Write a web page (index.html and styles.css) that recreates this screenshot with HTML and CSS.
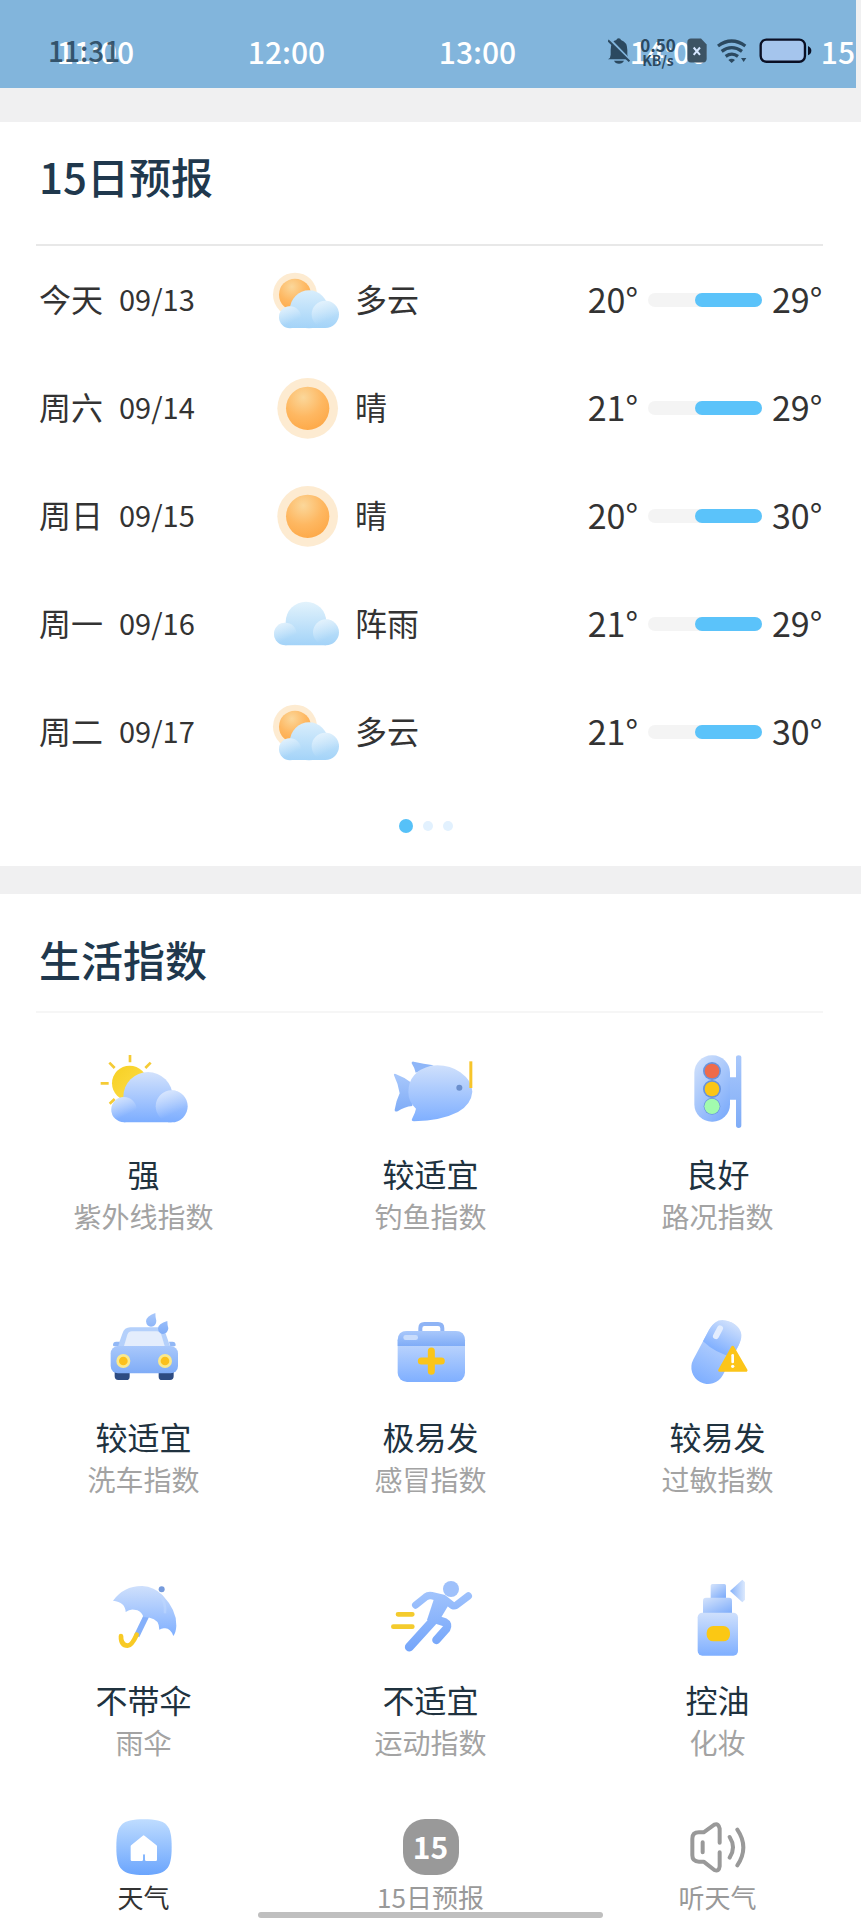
FILE: index.html
```html
<!DOCTYPE html>
<html lang="zh-CN">
<head>
<meta charset="utf-8">
<meta name="viewport" content="width=device-width, initial-scale=1">
<title>天气</title>
<link rel="stylesheet" href="styles.css">
</head>
<body>
<svg class="defs" width="0" height="0" aria-hidden="true">
  <defs>
    <radialGradient id="sunCore" cx=".4" cy=".25" r=".8"><stop offset="0" stop-color="#fbd79a"/><stop offset=".55" stop-color="#feb862"/><stop offset="1" stop-color="#fda847"/></radialGradient>
    <linearGradient id="skyCloudy" gradientUnits="userSpaceOnUse" x1="0" y1="90" x2="0" y2="205"><stop offset="0" stop-color="#d9eefc"/><stop offset="1" stop-color="#a3d3f8"/></linearGradient>
    <linearGradient id="skyRain" gradientUnits="userSpaceOnUse" x1="0" y1="64" x2="0" y2="196"><stop offset="0" stop-color="#e3f3fc"/><stop offset="1" stop-color="#a3d3f8"/></linearGradient>
    <linearGradient id="skyUv" gradientUnits="userSpaceOnUse" x1="0" y1="126" x2="0" y2="277"><stop offset="0" stop-color="#d3e2fc"/><stop offset="1" stop-color="#7cadff"/></linearGradient>
    <linearGradient id="bump" x1="0" y1="0" x2=".5" y2="1"><stop offset="0" stop-color="#fff" stop-opacity=".6"/><stop offset=".8" stop-color="#fff" stop-opacity="0"/></linearGradient>
    <linearGradient id="blue" x1="0" y1="0" x2="0" y2="1"><stop offset="0" stop-color="#cfe0fc"/><stop offset="1" stop-color="#7fafff"/></linearGradient>
    <linearGradient id="blueDiag" x1="0" y1="0" x2=".7" y2="1"><stop offset="0" stop-color="#d6e4fb"/><stop offset="1" stop-color="#80aefb"/></linearGradient>
    <linearGradient id="blueDeep" x1="0" y1="0" x2="0" y2="1"><stop offset="0" stop-color="#a9c8fb"/><stop offset="1" stop-color="#7facf7"/></linearGradient>
    <linearGradient id="yellow" x1="0" y1="0" x2="1" y2="1"><stop offset="0" stop-color="#f6cf22"/><stop offset="1" stop-color="#ffe04e"/></linearGradient>
    <linearGradient id="home" x1="0" y1="0" x2="0" y2="1"><stop offset="0" stop-color="#bedcff"/><stop offset="1" stop-color="#6ba5fd"/></linearGradient>
    <linearGradient id="spray" x1="0" y1="0" x2="1" y2="0"><stop offset="0" stop-color="#86b2fa"/><stop offset="1" stop-color="#dce9fd"/></linearGradient>
    <linearGradient id="runner" gradientUnits="userSpaceOnUse" x1="1080" y1="70" x2="1100" y2="270"><stop offset="0" stop-color="#a9c9fd"/><stop offset="1" stop-color="#74a5fa"/></linearGradient>
    <symbol id="w-cloudy" viewBox="816 12 216 216">
      <circle cx="888" cy="104" r="66" fill="#fdebd1"/>
      <circle cx="888" cy="104" r="48" fill="url(#sunCore)"/>
      <g fill="url(#skyCloudy)"><circle cx="930" cy="148" r="57"/><circle cx="873" cy="172" r="33"/><circle cx="979" cy="163" r="41"/><path d="M873 150h106v54h-106z"/></g>
      <circle cx="873" cy="172" r="33" fill="url(#bump)"/>
      <circle cx="979" cy="163" r="41" fill="url(#bump)"/>
    </symbol>
    <symbol id="w-sun" viewBox="816 336 216 216">
      <circle cx="926" cy="445" r="91" fill="#fdebd1"/>
      <circle cx="926" cy="445" r="65" fill="url(#sunCore)"/>
    </symbol>
    <symbol id="w-rain" viewBox="816 24 216 216">
      <g fill="url(#skyRain)"><circle cx="921" cy="126" r="61"/><circle cx="859" cy="162" r="34"/><circle cx="981" cy="157" r="39"/><path d="M859 140h122v56h-122z"/></g>
      <circle cx="859" cy="162" r="34" fill="url(#bump)"/>
      <circle cx="981" cy="157" r="39" fill="url(#bump)"/>
    </symbol>
  </defs>
</svg>

<header class="top">
  <ol class="hours">
    <li>11:00</li><li>12:00</li><li>13:00</li><li>14:00</li><li>15:00</li>
  </ol>
  <div class="status">
    <time class="clock">11:31</time>
    <div class="status-icons">
      <svg class="bell" viewBox="535 114 66 78" aria-label="静音"><path d="M535 178q8-4 8-14v-14q0-26 17-30 1-5 7-5t7 5q19 6 19 30v14q0 10 8 14z" fill="#2b4960"/><path d="M553 182h30q-4 9-15 9t-15-9z" fill="#2b4960"/><path d="M536 114l66 68" stroke="#82b5dc" stroke-width="8"/><path d="M535 121l64 63" stroke="#2b4960" stroke-width="6"/></svg>
      <div class="speed"><b>0.50</b><b class="unit">KB/s</b></div>
      <svg class="sim" viewBox="771 116 60 74" aria-label="无卡"><path d="M783 117h30l17 18v43q0 11-11 11h-36q-11 0-11-11v-50q0-11 11-11z" fill="#3c5364"/><path d="M791 144l19 22M810 144l-19 22" stroke="#d5e6ff" stroke-width="6"/></svg>
      <svg class="wifi" viewBox="858 116 90 76" aria-label="无线网络"><g fill="none" stroke="#2b4960" stroke-width="10"><path d="M861 139q41-30 82 0"/><path d="M872 155q30-22 61 0"/><path d="M884 170q19-13 37 0"/></g><path d="M892 181q10-8 20 0l-10 9zM930 175h16l-8 12z" fill="#2b4960"/></svg>
      <svg class="battery" viewBox="985 116 158 76" aria-label="电量"><rect x="990" y="120" width="132" height="66" rx="17" fill="#a5c5ed" stroke="#0a0f24" stroke-width="7"/><path d="M1131 139q10 5 10 14t-10 14z" fill="#0a0f24"/></svg>
    </div>
  </div>
</header>

<main>
  <section class="panel forecast">
    <h2>15日预报</h2>
    <ul class="days">
      <li><span>今天</span><time>09/13</time><svg aria-hidden="true"><use href="#w-cloudy"/></svg><span>多云</span><span class="temp">20°</span><i class="track"></i><span class="temp">29°</span></li>
      <li><span>周六</span><time>09/14</time><svg aria-hidden="true"><use href="#w-sun"/></svg><span>晴</span><span class="temp">21°</span><i class="track"></i><span class="temp">29°</span></li>
      <li><span>周日</span><time>09/15</time><svg aria-hidden="true"><use href="#w-sun"/></svg><span>晴</span><span class="temp">20°</span><i class="track"></i><span class="temp">30°</span></li>
      <li><span>周一</span><time>09/16</time><svg aria-hidden="true"><use href="#w-rain"/></svg><span>阵雨</span><span class="temp">21°</span><i class="track"></i><span class="temp">29°</span></li>
      <li><span>周二</span><time>09/17</time><svg aria-hidden="true"><use href="#w-cloudy"/></svg><span>多云</span><span class="temp">21°</span><i class="track"></i><span class="temp">30°</span></li>
    </ul>
    <div class="pager">
      <button class="current" aria-label="第1页"></button><button aria-label="第2页"></button><button aria-label="第3页"></button>
    </div>
  </section>

  <section class="panel indices">
    <h2>生活指数</h2>
    <ul class="grid">
      <li>
        <svg viewBox="106 36 288 288" aria-hidden="true"><g stroke="#f5cb35" stroke-width="8"><path d="M208 75v22M146 98l16 16M120 160h24M270 98l-16 16M147 221l15-14"/></g><circle cx="207" cy="160" r="53" fill="url(#yellow)"/><g fill="url(#skyUv)"><circle cx="262" cy="200" r="74"/><circle cx="190" cy="239" r="38"/><circle cx="333" cy="229" r="48"/><path d="M190 200h143v77h-143z"/></g><circle cx="190" cy="239" r="38" fill="url(#bump)"/><circle cx="333" cy="229" r="48" fill="url(#bump)"/></svg>
        <strong>强</strong><span>紫外线指数</span>
      </li>
      <li>
        <svg viewBox="127 36 288 288" aria-hidden="true"><path d="M160 136q-2-6 5-4 26 10 44 24l6 72q-24 2-44 16-10 3-9-5 4-26 15-49-5-30-17-54z" fill="url(#blueDeep)"/><path d="M213 100q-1-6 6-5 30 6 60 11l-54 22q-3-14-12-28z" fill="#8eb6f8"/><path d="M203 186q1-62 68-79 52-6 88 20 36 26 36 58-3 38-43 61-50 26-132 28-10 0-5-9 9-18 11-29-23-20-23-50z" fill="url(#blue)"/><path d="M386 94h9v80h-9z" fill="#f7c52b"/><circle cx="356" cy="173" r="9" fill="#6b8fcd"/></svg>
        <strong>较适宜</strong><span>钓鱼指数</span>
      </li>
      <li>
        <svg viewBox="118 36 288 288" aria-hidden="true"><path d="M292 142h24V81q0-5 8-5t8 5v205q0 8-8 8t-8-8v-77h-24z" fill="url(#blueDeep)"/><rect x="191" y="76" width="107" height="199" rx="52" fill="url(#blueDiag)"/><g fill="#6993dc"><circle cx="244" cy="123" r="27"/><circle cx="244" cy="177" r="27"/><circle cx="244" cy="229" r="25"/></g><circle cx="244" cy="123" r="22" fill="#ee6b4a"/><circle cx="244" cy="177" r="22" fill="#fbc616"/><circle cx="244" cy="229" r="23" fill="#a2fbae"/></svg>
        <strong>良好</strong><span>路况指数</span>
      </li>
      <li>
        <svg viewBox="106 30 288 288" aria-hidden="true"><path d="M162 225h45v20q0 10-10 10h-24q-11 0-11-11zM294 225h45v19q0 11-11 11h-24q-10 0-10-10z" fill="#2d4b82"/><path d="M170 158l15-42q6-19 24-19h82q18 0 24 19l15 42z" fill="#b4d0fb"/><path d="M190 153l10-34q4-10 14-10h74q10 0 14 10l10 34z" fill="#e4edfc"/><path d="M157 150q0-10 10-10h10l-4 14h-12q-4 0-4-4zM345 150q0-10-10-10h-10l4 14h12q4 0 4-4z" fill="#92b8f6"/><rect x="150" y="153" width="202" height="82" rx="22" fill="url(#blueDeep)"/><circle cx="188" cy="198" r="21" fill="#fbe98c"/><circle cx="188" cy="198" r="13" fill="#fcc01b"/><circle cx="313" cy="198" r="21" fill="#fbe98c"/><circle cx="313" cy="198" r="13" fill="#fcc01b"/><path d="M284 54q-28 10-28 25 2 16 15 16 16-1 16-18-3-10-3-23zM320 78q-28 9-28 22 1 16 15 17 15-2 16-17-3-10-3-22z" fill="url(#blueDeep)"/></svg>
        <strong>较适宜</strong><span>洗车指数</span>
      </li>
      <li>
        <svg viewBox="967 30 288 288" aria-hidden="true"><path d="M1079 112v-12q0-13 12-13h41q13 0 13 13v12" fill="none" stroke="#8fb4f5" stroke-width="12"/><rect x="1011" y="108" width="202" height="153" rx="28" fill="url(#blue)"/><path d="M1011 153v-17q0-28 28-28h145q29 0 29 28v17z" fill="url(#blueDeep)"/><rect x="1028" y="120" width="44" height="15" rx="7" fill="#c8dcfc"/><path d="M1112 168v61M1082 198h60" stroke="#fac51a" stroke-width="21" stroke-linecap="round"/></svg>
        <strong>极易发</strong><span>感冒指数</span>
      </li>
      <li>
        <svg viewBox="118 30 288 288" aria-hidden="true"><g transform="rotate(28 256 172)"><rect x="206" y="71" width="100" height="202" rx="50" fill="url(#blue)"/><path d="M206 161v-40q0-50 50-50t50 50v40q-50 14-100 0z" fill="url(#blue)"/><rect x="224" y="94" width="18" height="44" rx="9" fill="#e3edfe"/></g><path d="M306 157l40 69h-79z" fill="#fcc519" stroke="#fcc519" stroke-width="9" stroke-linejoin="round"/><path d="M306 181v20" stroke="#fff" stroke-width="8" stroke-linecap="round"/><circle cx="306" cy="214" r="5" fill="#fff"/></svg>
        <strong>较易发</strong><span>过敏指数</span>
      </li>
      <li>
        <svg viewBox="106 24 288 288" aria-hidden="true"><circle cx="303" cy="88" r="9" fill="#769bdc"/><path d="M257 168l-29 60" stroke="#85b0fa" stroke-width="17"/><path d="M228 224q-15 33-27 33-21-1-20-29" fill="none" stroke="#f8ca25" stroke-width="14" stroke-linecap="round"/><path d="M157 122q33-45 88-44 36 2 61 28 43 46 41 91-1 20-9 31-9-23-24-23-10-2-18 4 0-31-29-36-12-2-18-1-8-23-28-23-13-3-26 7-1-30-38-34z" fill="url(#blue)"/><path d="M299 106q17 21 14 54" stroke="#bed7ff" stroke-width="8" fill="none" opacity=".6"/></svg>
        <strong>不带伞</strong><span>雨伞</span>
      </li>
      <li>
        <svg viewBox="967 24 288 288" aria-hidden="true"><g stroke="#f4cb2d" stroke-width="14" stroke-linecap="round"><path d="M1012 163h43M998 200h57"/></g><g fill="none" stroke="url(#runner)" stroke-linecap="round" stroke-linejoin="round"><path d="M1065 135l30-24q8-6 18-4l35 8 28 22q5 2 10-1l37-28" stroke-width="22"/><path d="M1144 124l-28 60-70 77" stroke-width="27"/><path d="M1124 178l28 9q12 6 5 19l-30 34" stroke-width="25"/></g><path d="M1122 110l45 20-36 60-32-10z" fill="url(#runner)"/><circle cx="1171" cy="87" r="24" fill="#9fc1fb"/></svg>
        <strong>不适宜</strong><span>运动指数</span>
      </li>
      <li>
        <svg viewBox="1828 24 288 288" aria-hidden="true"><rect x="1950" y="72" width="46" height="46" rx="5" fill="url(#blueDiag)"/><rect x="1927" y="113" width="87" height="55" rx="9" fill="url(#blueDiag)"/><rect x="1911" y="158" width="121" height="129" rx="14" fill="url(#blue)"/><rect x="1938" y="198" width="70" height="46" rx="20" fill="#fbc814"/><path d="M2008 93l37-34 8 8v52l-8 8z" fill="url(#spray)"/></svg>
        <strong>控油</strong><span>化妆</span>
      </li>
    </ul>
  </section>
</main>

<nav class="tabs">
  <a href="#" class="active" aria-current="page"><svg viewBox="166 86 168 168" aria-hidden="true"><path d="M250 87c68 0 83 16 83 83s-15 84-83 84-83-17-83-84 15-83 83-83z" fill="url(#home)"/><path d="M249 139l36 29v40h-28v-17q-7-7-14 0v17h-29v-40z" fill="#fff" stroke="#fff" stroke-width="8" stroke-linejoin="round"/></svg>天气</a>
  <a href="#"><b class="badge">15</b>15日预报</a>
  <a href="#"><svg viewBox="1889 86 168 168" aria-hidden="true"><g fill="none" stroke="#999" stroke-width="12" stroke-linecap="round" stroke-linejoin="round"><path d="M1978 157v-42q-3-17-16-12l-32 23h-14q-20 0-20 19v50q0 19 20 19h14l32 25q14 6 16-11v-42"/><path d="M1927 156v30M2008 140q20 31 0 62M2031 118q36 53 0 107"/></g></svg>听天气</a>
  <i class="home-bar"></i>
</nav>
</body>
</html>
```
FILE: styles.css
```css
* { box-sizing: border-box; }

body {
  margin: 0;
  background: #f0f0f1;
  color: #333;
  font-family: "Noto Sans CJK SC", "Noto Sans", sans-serif;
}

ul, ol { margin: 0; padding: 0; list-style: none; }
svg { display: block; }
.defs { position: absolute; }

/* Hourly strip scrolled under the system status bar */
.top {
  position: relative;
  height: 88px;
  margin-right: 5px;
  overflow: hidden;
  background: #82b5dc;
}

.hours { display: flex; padding-top: 29px; }

.hours li {
  flex: 0 0 191px;
  font-size: 30px;
  font-weight: 500;
  line-height: 44px;
  text-align: center;
  color: #fff;
}

.status {
  position: absolute;
  inset: 0;
  display: flex;
  justify-content: space-between;
  padding: 28px 44px 0 48px;
  color: #2b4960;
}

.clock { font-size: 28px; font-weight: 500; line-height: 44px; opacity: .9; }
.status-icons { display: flex; align-items: flex-start; padding-top: 10px; }
.bell { width: 22px; height: 26px; margin-right: 3px; }
.speed { display: flex; flex-direction: column; width: 50px; text-align: center; font-size: 17px; line-height: 14px; }
.unit { font-size: 14px; line-height: 17px; }
.sim { width: 20px; height: 25px; margin: 0 10px 0 4px; }
.wifi { width: 30px; height: 26px; margin-right: 12px; }
.battery { width: 53px; height: 26px; }

.panel { background: #fff; }

.panel h2 {
  margin: 0 39px;
  font-size: 42px;
  font-weight: 500;
  line-height: 56px;
  color: #20384d;
}

.forecast { margin-top: 34px; padding-top: 26px; }
.indices { margin-top: 28px; padding-top: 37px; }

.days::before, .grid::before {
  content: "";
  display: block;
  height: 2px;
  margin: 0 38px 0 36px;
  background: #e8e8e8;
}

.days { margin-top: 40px; }
.grid { margin-top: 24px; }

.days li {
  display: grid;
  grid-template-columns: 80px 152px 84px 1fr 60px 134px 50px;
  align-items: center;
  height: 108px;
  padding: 0 39px;
  font-size: 32px;
  line-height: 48px;
}

.days span, .days time { padding-bottom: 5px; }
.days time { font-size: 29px; }
.days svg { width: 72px; height: 72px; }
.days .temp { padding-bottom: 3px; font-size: 34px; text-align: right; }

.track {
  height: 14px;
  margin: 0 10px;
  padding-left: 47px;
  border-radius: 7px;
  background: #f4f4f4;
}

.track::before {
  content: "";
  display: block;
  height: 100%;
  border-radius: 7px;
  background: #5bc3fa;
}

.pager { display: flex; justify-content: center; align-items: center; gap: 10px; height: 80px; padding-right: 10px; }
.pager button { width: 10px; height: 10px; padding: 0; border: 0; border-radius: 50%; background: #e2f1fe; }
.pager .current { width: 14px; height: 14px; background: #56c1f8; }

.grid { display: grid; grid-template-columns: repeat(3, 1fr); }
.grid::before { grid-column: 1 / -1; background: #f6f6f6; }

.grid li {
  display: flex;
  flex-direction: column;
  align-items: center;
  height: 263px;
  padding-top: 29px;
}

.grid svg { width: 96px; height: 96px; margin-bottom: 14px; }
.grid strong { font-size: 32px; font-weight: 400; line-height: 42px; color: #20323f; }
.grid span { font-size: 28px; line-height: 44px; color: #a3a3a3; }

.tabs {
  position: relative;
  display: grid;
  grid-template-columns: repeat(3, 1fr);
  height: 118px;
  background: #fff;
}

.tabs a {
  display: flex;
  flex-direction: column;
  align-items: center;
  gap: 4px;
  padding-top: 17px;
  font-size: 26px;
  line-height: 36px;
  color: #999;
  text-decoration: none;
}

.tabs .active { color: #333; }
.tabs svg, .badge { width: 56px; height: 56px; }

.badge {
  border-radius: 22px;
  background: #999;
  color: #fff;
  font-size: 30px;
  line-height: 54px;
  text-align: center;
}

.home-bar {
  position: absolute;
  left: 30%;
  right: 30%;
  bottom: 2px;
  height: 6px;
  border-radius: 3px;
  background: #bfbfbf;
}
```
